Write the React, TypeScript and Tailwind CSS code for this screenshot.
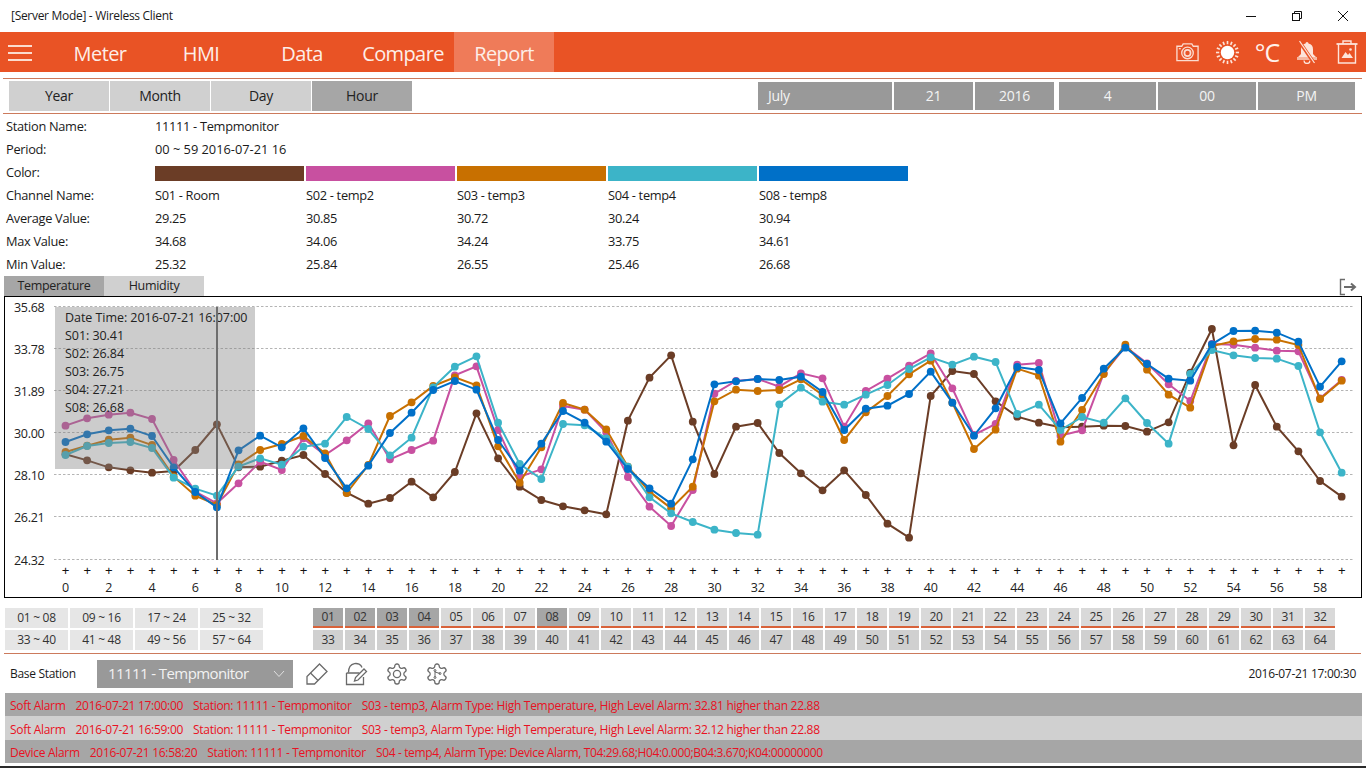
import React from "react";

const FONT = "font-['Open_Sans','Noto_Sans',sans-serif]";

const S01 = [[553,571,592,601,608,603,540,463,592,590,572,555,612,668,701,684],[545,592,516,340,475,560,600,619,631,643,362,233,166,365,522,380,369,459,520,571,511,585],[761,803,378,303,312,394,440,458,472,470,467,468,485,457,308,177,526,345,470,544,633,680]];
const S02 = [[467,445,434,428,447,570,665,700,640,575,600,505,555,511,460,568],[450,422,226,199,390,530,508,318,329,397,531,620,678,570,281,243,237,260,220,235,380,273],[326,287,250,355,495,462,284,279,497,481,310,230,280,343,393,222,224,233,242,244,385,330]];
const S03 = [[546,527,509,503,525,620,677,705,583,540,522,498,550,669,585,438],[307,258,232,256,439,548,442,309,329,388,500,575,625,560,304,269,273,270,238,285,420,337],[378,313,272,398,537,479,296,317,515,420,312,224,299,374,413,228,214,207,209,225,387,332]];
const S04 = [[555,528,519,516,534,623,656,677,590,565,584,530,521,441,477,556],[413,262,200,169,368,492,537,372,376,415,500,592,640,666,689,699,704,313,263,305,314,284],[345,297,262,284,260,276,432,404,480,441,458,385,459,521,312,240,256,264,266,288,487,608]];
const S08 = [[516,493,481,476,498,592,666,712,541,497,532,475,564,655,587,489],[338,270,243,269,420,512,431,333,368,425,507,565,611,478,253,244,237,240,230,276,390,326],[407,372,305,398,497,415,291,300,460,384,296,233,282,326,332,223,183,182,188,215,350,274]];

function toPoints(s: number[][]) {
  const ys = [...s[0].map((v) => 270 + v / 3), ...s[1].map((v) => 300 + v / 3), ...s[2].map((v) => 270 + v / 3)];
  return ys.map((y, i) => [65.5 + i * 21.63, y] as const);
}

const SERIES = [
  { c: "#6b3d26", d: S01 },
  { c: "#c850a0", d: S02 },
  { c: "#c87000", d: S03 },
  { c: "#3cb4c8", d: S04 },
  { c: "#0070c8", d: S08 },
];

const GRID: [string, number][] = [["35.68", 306.5], ["33.78", 348.5], ["31.89", 390.5], ["30.00", 432.5], ["28.10", 474.5], ["26.21", 516.5], ["24.32", 559.5]];

function Chart() {
  return (
    <svg viewBox="5 297 1356 300" width={1356} height={300} className="block" fontFamily="'Open Sans', sans-serif">
      {GRID.map(([t, y]) => (
        <g key={t}>
          <line x1={54} x2={1354} y1={y} y2={y} stroke="#b4b4b4" strokeWidth={1} strokeDasharray="2.5 2" />
          <text x={14} y={y + 5} fontSize={12.5} fill="#222" letterSpacing={-0.3}>{t}</text>
        </g>
      ))}
      {Array.from({ length: 60 }, (_, i) => (
        <text key={i} x={65.5 + i * 21.63} y={575} fontSize={13} fill="#111" fontFamily="'Liberation Sans', sans-serif" textAnchor="middle">+</text>
      ))}
      {Array.from({ length: 30 }, (_, i) => (
        <text key={i} x={65.5 + i * 2 * 21.63} y={592} fontSize={12.5} fill="#222" textAnchor="middle" letterSpacing={-0.2}>{i * 2}</text>
      ))}
      {SERIES.map((s) => {
        const p = toPoints(s.d);
        return (
          <g key={s.c}>
            <polyline points={p.map((q) => q.join(",")).join(" ")} fill="none" stroke={s.c} strokeWidth={2} />
            {p.map((q, i) => (
              <circle key={i} cx={q[0]} cy={q[1]} r={3.9} fill={s.c} />
            ))}
          </g>
        );
      })}
    </svg>
  );
}

const Camera = () => (
  <svg width="25" height="24" viewBox="0 0 26 24" fill="none" stroke="#fbdcd0" strokeWidth="1.4">
    <path d="M2 6h5l1.5-2.5h9L19 6h5v15H2z" />
    <circle cx="13" cy="13" r="6" />
    <circle cx="13" cy="13" r="3.2" strokeWidth="1.8" />
    <line x1="4" y1="8.5" x2="6" y2="8.5" />
  </svg>
);

const Sun = () => (
  <svg width="25" height="25" viewBox="0 0 26 26" stroke="#fde4da" strokeWidth="1.7">
    <circle cx="13" cy="13" r="7" fill="#fff" stroke="none" />
    {Array.from({ length: 16 }, (_, i) => {
      const a = (i * Math.PI) / 8;
      return <line key={i} x1={13 + Math.cos(a) * 8.6} y1={13 + Math.sin(a) * 8.6} x2={13 + Math.cos(a) * 12} y2={13 + Math.sin(a) * 12} />;
    })}
  </svg>
);

const BellOff = () => (
  <svg width="24" height="24" viewBox="0 0 24 24">
    <path d="M10.5 3.5a1.5 1.5 0 0 1 3 0 6 6 0 0 1 4.5 6V14l3 3H3l3-3V9.5a6 6 0 0 1 4.5-6z" fill="#fde4da" />
    <path d="M2 17h20v3H2z" fill="#f6b7a0" />
    <path d="M9 20.5a3 3 0 0 0 6 0" fill="none" stroke="#fde4da" strokeWidth="1.3" />
    <line x1="4" y1="1" x2="19" y2="23" stroke="#e95325" strokeWidth="3.4" />
    <line x1="4.5" y1="1" x2="19.5" y2="23" stroke="#fde4da" strokeWidth="1.3" />
  </svg>
);

const TrashPic = () => (
  <svg width="24" height="26" viewBox="0 0 24 26" fill="none" stroke="#fde4da" strokeWidth="1.4">
    <path d="M1.5 5h21" strokeWidth="1.8" />
    <path d="M8 5V2h8v3" />
    <path d="M3.5 5v19h17V5" />
    <path d="M6.5 19l4-6 2.5 3 1.5-2 3.5 5z" fill="#fde4da" stroke="none" />
    <circle cx="15.5" cy="10.5" r="1.3" fill="#fde4da" stroke="none" />
  </svg>
);

const ExportIcon = () => (
  <svg width="18" height="18" viewBox="0 0 18 18" fill="none" stroke="#6b6b6b">
    <path d="M6 1.5H1.5v15H6" strokeWidth="1.4" />
    <path d="M5 9h10" strokeWidth="2" />
    <path d="M12 5.5L16 9l-4 3.5" strokeWidth="2" />
  </svg>
);

const GEAR = "M12.22 2h-.44a2 2 0 0 0-2 2v.18a2 2 0 0 1-1 1.73l-.43.25a2 2 0 0 1-2 0l-.15-.08a2 2 0 0 0-2.73.73l-.22.38a2 2 0 0 0 .73 2.73l.15.1a2 2 0 0 1 1 1.72v.51a2 2 0 0 1-1 1.74l-.15.09a2 2 0 0 0-.73 2.73l.22.38a2 2 0 0 0 2.73.73l.15-.08a2 2 0 0 1 2 0l.43.25a2 2 0 0 1 1 1.73V20a2 2 0 0 0 2 2h.44a2 2 0 0 0 2-2v-.18a2 2 0 0 1 1-1.73l.43-.25a2 2 0 0 1 2 0l.15.08a2 2 0 0 0 2.73-.73l.22-.39a2 2 0 0 0-.73-2.73l-.15-.08a2 2 0 0 1-1-1.74v-.5a2 2 0 0 1 1-1.74l.15-.09a2 2 0 0 0 .73-2.73l-.22-.38a2 2 0 0 0-2.73-.73l-.15.08a2 2 0 0 1-2 0l-.43-.25a2 2 0 0 1-1-1.73V4a2 2 0 0 0-2-2z";

const TOOLS = (
  <div className="flex items-center gap-[16px] ml-[12px]">
    <svg width="24" height="24" viewBox="0 0 24 24" fill="none" stroke="#6a6a6a" strokeWidth="1.3">
      <path d="M14.5 2L22 9.5 9.5 22H2v-7.5z" />
      <path d="M5.5 11L13 18.5" />
    </svg>
    <svg width="24" height="24" viewBox="0 0 24 24" fill="none" stroke="#6a6a6a" strokeWidth="1.3">
      <path d="M1.5 11h13M1.5 11v11.5h17V15" />
      <path d="M3.5 10.5c0-11 11.5-11 13.5-5" />
      <path d="M9.5 19l1-3.5L19 7l2.5 2.5-8.5 8.5z" />
    </svg>
    <svg width="24" height="24" viewBox="0 0 24 24" fill="none" stroke="#6a6a6a" strokeWidth="1.3">
      <path d={GEAR} />
      <circle cx="12" cy="12" r="3.6" />
    </svg>
    <svg width="24" height="24" viewBox="0 0 24 24" fill="none" stroke="#6a6a6a" strokeWidth="1.3">
      <path d={GEAR} />
      <path d="M10 8.5v7M10 10l5 1.5" strokeWidth="1" />
      <circle cx="10" cy="8.5" r="1" strokeWidth="1" />
      <circle cx="10" cy="15.5" r="1" strokeWidth="1" />
      <circle cx="15" cy="11.5" r="1" strokeWidth="1" />
    </svg>
  </div>
);

const ROWS: [string, string[]][] = [
  ["Channel Name:", ["S01 - Room", "S02 - temp2", "S03 - temp3", "S04 - temp4", "S08 - temp8"]],
  ["Average Value:", ["29.25", "30.85", "30.72", "30.24", "30.94"]],
  ["Max Value:", ["34.68", "34.06", "34.24", "33.75", "34.61"]],
  ["Min Value:", ["25.32", "25.84", "26.55", "25.46", "26.68"]],
];
const COLORS = ["bg-[#6b3d26]", "bg-[#c850a0]", "bg-[#c87000]", "bg-[#3cb4c8]", "bg-[#0070c8]"];
const RANGES = ["01 ~ 08", "09 ~ 16", "17 ~ 24", "25 ~ 32", "33 ~ 40", "41 ~ 48", "49 ~ 56", "57 ~ 64"];
const SELECTED = [1, 2, 3, 4, 8];
const pad = (n: number) => String(n).padStart(2, "0");

const ALARMS = [
  { bg: "bg-[#a6a6a6]", h: "h-[23px]", a: "Soft Alarm", b: "2016-07-21 17:00:00", c: "Station: 11111 - Tempmonitor", d: "S03 - temp3, Alarm Type: High Temperature, High Level Alarm: 32.81 higher than 22.88", t: "" },
  { bg: "bg-[#d0d0d0]", h: "h-[24px]", a: "Soft Alarm", b: "2016-07-21 16:59:00", c: "Station: 11111 - Tempmonitor", d: "S03 - temp3, Alarm Type: High Temperature, High Level Alarm: 32.12 higher than 22.88", t: "" },
  { bg: "bg-[#a6a6a6]", h: "h-[23px]", a: "Device Alarm", b: "2016-07-21 16:58:20", c: "Station: 11111 - Tempmonitor", d: "S04 - temp4, Alarm Type: Device Alarm, T04:29.68;H04:0.000;B04:3.670;K04:00000000", t: "tracking-[-0.03em]" },
];

export default function App() {
  return (
    <div className={`w-[1366px] h-[768px] overflow-hidden bg-white flex flex-col text-[12px] tracking-[-0.025em] text-[#1a1a1a] ${FONT}`}>
      {/* Title bar */}
      <div className="h-8 flex items-center pl-[11px] shrink-0">
        <span>[Server Mode] - Wireless Client</span>
        <div className="ml-auto flex items-center">
          <div className="w-[46px] flex justify-center">
            <svg width="12" height="12" viewBox="0 0 12 12"><line x1="1" x2="11" y1="6.5" y2="6.5" stroke="#111" /></svg>
          </div>
          <div className="w-[46px] flex justify-center">
            <svg width="12" height="12" viewBox="0 0 12 12" fill="none" stroke="#111"><rect x="1.5" y="3.5" width="7" height="7" /><path d="M3.5 3.5v-2h7v7h-2" /></svg>
          </div>
          <div className="w-[46px] flex justify-center">
            <svg width="12" height="12" viewBox="0 0 12 12" stroke="#111"><path d="M1 1l10 10M11 1L1 11" /></svg>
          </div>
        </div>
      </div>

      {/* Nav */}
      <div className="h-10 shrink-0 bg-[#e95325] flex items-stretch text-[20px] text-[#fdeee8] tracking-[-0.03em]">
        <div className="w-[50px] flex flex-col gap-[5px] pl-[8px] pt-[13px]">
          <div className="w-6 h-[2px] bg-[#fbdccf]" />
          <div className="w-6 h-[2px] bg-[#fbdccf]" />
          <div className="w-6 h-[2px] bg-[#fbdccf]" />
        </div>
        <div className="flex gap-px">
          {["Meter", "HMI", "Data", "Compare", "Report"].map((t) => (
            <div key={t} className={`w-[100px] flex items-center justify-center pt-[4px] ${t === "Report" ? "bg-[#ef7b59]" : ""}`}>{t}</div>
          ))}
        </div>
        <div className="ml-auto mr-[-1px] flex items-center text-[#fff1ea]">
          <div className="w-10 flex justify-center"><Camera /></div>
          <div className="w-10 flex justify-center"><Sun /></div>
          <div className="w-10 flex justify-center text-[25px] tracking-[-0.04em] leading-none">°C</div>
          <div className="w-10 flex justify-center"><BellOff /></div>
          <div className="w-10 flex justify-center"><TrashPic /></div>
        </div>
      </div>

      {/* Period selector */}
      <div className="mt-[6px] ml-[3px] w-[1359px] h-[36px] border-y border-[#cc7a5c] flex items-center justify-between pl-[6px] pr-[7px] shrink-0">
        <div className="flex gap-px text-[14px] text-[#222]">
          {["Year", "Month", "Day", "Hour"].map((t) => (
            <div key={t} className={`w-[100px] h-[30px] flex items-center justify-center pb-px ${t === "Hour" ? "bg-[#a6a6a6]" : "bg-[#d0d0d0]"}`}>{t}</div>
          ))}
        </div>
        <div className="flex gap-[5px] text-[14px] text-[#f4f4f4]">
          <div className="flex gap-[2px]">
            <div className="w-[134px] h-[28px] bg-[#999999] flex items-center pl-[10px] pb-[2px]">July</div>
            <div className="w-[79px] h-[28px] bg-[#999999] flex items-center justify-center pb-[2px]">21</div>
            <div className="w-[79px] h-[28px] bg-[#999999] flex items-center justify-center pb-[2px]">2016</div>
          </div>
          <div className="flex gap-[2px]">
            <div className="w-[97px] h-[28px] bg-[#999999] flex items-center justify-center pb-[2px]">4</div>
            <div className="w-[98px] h-[28px] bg-[#999999] flex items-center justify-center pb-[2px]">00</div>
            <div className="w-[97px] h-[28px] bg-[#999999] flex items-center justify-center pb-[2px]">PM</div>
          </div>
        </div>
      </div>

      {/* Info grid */}
      <div className="pl-[6px] pt-[1px] grid grid-cols-[149px_repeat(5,151px)] auto-rows-[23px] items-center shrink-0 text-[12.8px]">
        <div>Station Name:</div>
        <div className="col-span-5">11111 - Tempmonitor</div>
        <div>Period:</div>
        <div className="col-span-5 tracking-normal">00 ~ 59 2016-07-21 16</div>
        <div>Color:</div>
        {COLORS.map((c) => (
          <div key={c} className={`w-[149px] h-[15px] mt-[1px] ${c}`} />
        ))}
        {ROWS.map(([label, vals]) => (
          <React.Fragment key={label}>
            <div>{label}</div>
            {vals.map((v) => (
              <div key={v}>{v}</div>
            ))}
          </React.Fragment>
        ))}
      </div>

      {/* Chart tabs */}
      <div className="h-[20px] pl-[4px] pr-[9px] flex items-stretch shrink-0 text-[12.5px] text-[#222]">
        <div className="w-[100px] bg-[#a6a6a6] flex items-center justify-center">Temperature</div>
        <div className="w-[100px] bg-[#d0d0d0] flex items-center justify-center">Humidity</div>
        <div className="ml-auto pt-[2px]"><ExportIcon /></div>
      </div>

      {/* Chart */}
      <div className="relative ml-[4px] w-[1358px] h-[302px] border border-black shrink-0 overflow-hidden">
        <Chart />
        <div className="absolute left-[50px] top-[10px] w-[200px] h-[162px] bg-[rgba(128,128,128,0.4)] pl-[10px] pt-[2px] text-[12.5px] leading-[18px] tracking-[-0.05px] text-[#222]">
          <div>Date Time: 2016-07-21 16:07:00</div>
          <div>S01: 30.41</div>
          <div>S02: 26.84</div>
          <div>S03: 26.75</div>
          <div>S04: 27.21</div>
          <div>S08: 26.68</div>
        </div>
        <div className="absolute left-[211px] top-[10px] w-[2px] h-[253px] bg-[#6e6e6e]" />
      </div>

      {/* Channel selector */}
      <div className="mt-[10px] ml-[5px] flex text-[12px] text-[#333] shrink-0">
        <div className="grid grid-cols-[repeat(4,63px)] auto-rows-[20px] gap-x-[2px] gap-y-[2px]">
          {RANGES.map((r) => (
            <div key={r} className="bg-[#e6e6e6] flex items-center justify-center">{r}</div>
          ))}
        </div>
        <div className="ml-[50px] grid grid-cols-[repeat(32,30px)] auto-rows-[20px] gap-x-[2px] gap-y-[2px]">
          {Array.from({ length: 32 }, (_, i) => i + 1).map((n) => (
            <div key={n} className={`flex items-center justify-center border-b-2 border-[#d8623a] box-border ${SELECTED.includes(n) ? "bg-[#a6a6a6]" : "bg-[#d9d9d9]"}`}>{pad(n)}</div>
          ))}
          {Array.from({ length: 32 }, (_, i) => i + 33).map((n) => (
            <div key={n} className="bg-[#d0d0d0] flex items-center justify-center">{n}</div>
          ))}
        </div>
      </div>

      <div className="mt-[3px] ml-[4px] w-[1357px] h-px bg-[#cc7a5c] shrink-0" />

      {/* Base station */}
      <div className="h-[39px] flex items-center pl-[10px] pr-[10px] shrink-0">
        <div className="w-[87px] pt-px">Base Station</div>
        <div className="w-[196px] h-[28px] bg-[#999999] flex items-center justify-between pl-[11px] pr-[8px] text-[15px] tracking-[-0.039em] text-[#f2f2f2] whitespace-nowrap">
          <span>11111 - Tempmonitor</span>
          <svg width="12" height="8" viewBox="0 0 12 8" fill="none" stroke="#e0e0e0" strokeWidth="1"><path d="M1 1l5 5.5L11 1" /></svg>
        </div>
        {TOOLS}
        <div className="ml-auto pt-px">2016-07-21 17:00:30</div>
      </div>

      {/* Alarms */}
      <div className="ml-[5px] w-[1357px] flex flex-col text-[#e81123] shrink-0">
        {ALARMS.map((a) => (
          <div key={a.b} className={`${a.bg} ${a.h} flex items-center gap-[10px] pl-[5px] pt-[3px]`}>
            <span>{a.a}</span>
            <span>{a.b}</span>
            <span>{a.c}</span>
            <span className={a.t}>{a.d}</span>
          </div>
        ))}
      </div>
      <div className="mt-[3px] h-[2px] bg-[#2b2b2b] shrink-0" />
    </div>
  );
}
